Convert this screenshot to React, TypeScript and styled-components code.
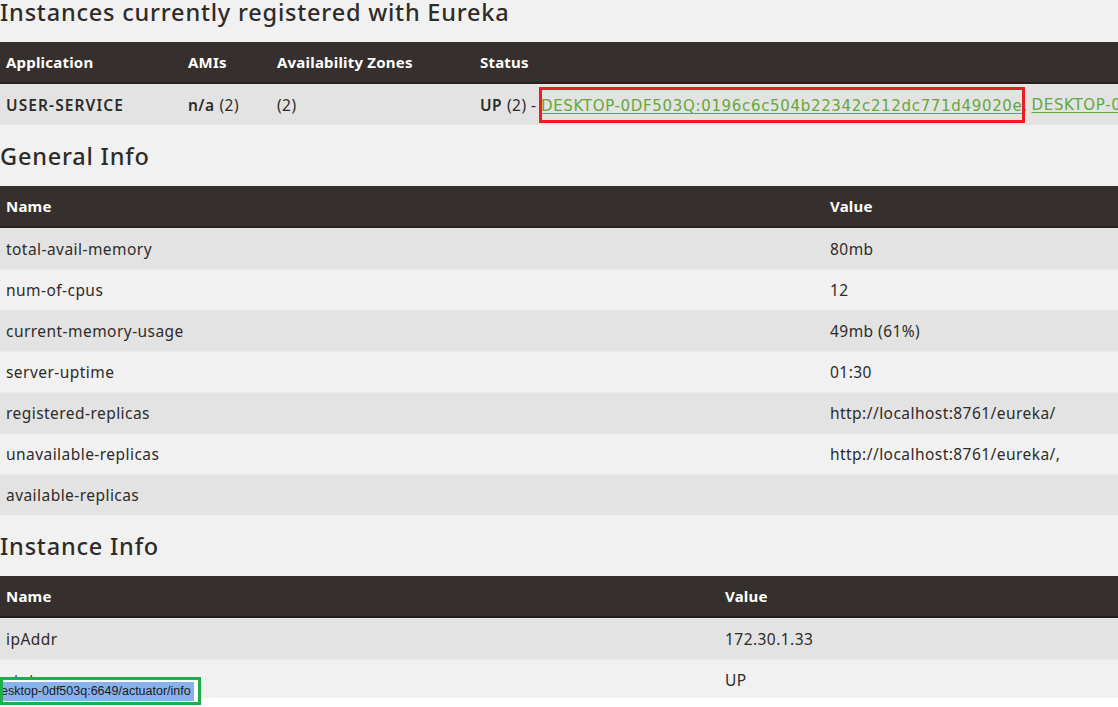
import React from "react";
import styled, { createGlobalStyle } from "styled-components";

const Global = createGlobalStyle`
  html, body { margin: 0; padding: 0; background: #ffffff; }
  body { font-family: "Noto Sans", "Open Sans", sans-serif; color: #2d2a28; overflow: hidden; }
  * { box-sizing: border-box; }
`;

const Viewport = styled.div`
  position: relative;
  width: 1118px;
  height: 707px;
  background: #ffffff;
`;

const Page = styled.div`
  width: 1118px;
  height: 698px;
  overflow: hidden;
  background: #f1f1f1;
`;

const Heading = styled.h2<{ $first?: boolean }>`
  margin: 0;
  height: ${(p) => (p.$first ? 42 : 61)}px;
  padding-top: ${(p) => (p.$first ? 0 : 19)}px;
  font-size: 23.5px;
  line-height: 24px;
  font-weight: 500;
  letter-spacing: 0.8px;
  color: #2e2b29;
  white-space: nowrap;
`;

const Table = styled.div<{ $cols: string; $width?: number }>`
  display: grid;
  grid-template-columns: ${(p) => p.$cols};
  width: ${(p) => (p.$width ? `${p.$width}px` : "100%")};
`;

const HeadCell = styled.div`
  height: 42px;
  background: #35302d;
  border-bottom: 2px solid #23201e;
  color: #ffffff;
  font-weight: 700;
  font-size: 15px;
  padding: 0 6px 1px;
  display: flex;
  align-items: center;
  letter-spacing: 0.2px;
  white-space: nowrap;
`;

const Cell = styled.div<{ $odd: boolean }>`
  height: 41px;
  padding: 0 6px 1px;
  display: flex;
  align-items: center;
  font-size: 15.5px;
  letter-spacing: 0.45px;
  white-space: nowrap;
  background: ${(p) => (p.$odd ? "#e3e3e3" : "#f1f1f1")};
  border-top: 1px solid #e9e9e9;
  color: #2e2b29;
`;

const B = styled.b<{ $wide?: boolean }>`
  font-weight: 600;
  margin-right: 5px;
  letter-spacing: ${(p) => (p.$wide ? "1.1px" : "0.45px")};
`;

const Link = styled.a`
  font-family: "DejaVu Sans", Verdana, sans-serif;
  font-size: 15px;
  letter-spacing: 0.67px;
  color: #64a83a;
  text-decoration: underline;
  text-underline-offset: 2px;
`;

const Boxed = styled.span`
  position: relative;
`;

const RedBox = styled.span`
  position: absolute;
  left: -2px;
  right: -3px;
  top: -7px;
  bottom: -7px;
  border: 3px solid #ec1c24;
  pointer-events: none;
`;

const StatusBar = styled.div`
  position: absolute;
  left: 0;
  top: 677px;
  width: 201px;
  height: 28px;
  border: 3px solid #1fae4b;
  background: #ffffff;
  padding: 2px 4px 1px 0;
  overflow: hidden;
`;

const StatusText = styled.div`
  height: 100%;
  background: #88b2eb;
  color: #1b1b1b;
  font-family: "Liberation Sans", Arial, sans-serif;
  font-size: 12.5px;
  line-height: 18px;
  white-space: nowrap;
  overflow: hidden;
  text-indent: -2px;
`;

const general: [string, string][] = [
  ["total-avail-memory", "80mb"],
  ["num-of-cpus", "12"],
  ["current-memory-usage", "49mb (61%)"],
  ["server-uptime", "01:30"],
  ["registered-replicas", "http://localhost:8761/eureka/"],
  ["unavailable-replicas", "http://localhost:8761/eureka/,"],
  ["available-replicas", ""],
];

const instance: [string, string][] = [
  ["ipAddr", "172.30.1.33"],
  ["status", "UP"],
];

export default function App() {
  return (
    <>
      <Global />
      <Viewport>
        <Page>
          <Heading $first>Instances currently registered with Eureka</Heading>
          <Table $cols="182px 89px 203px 1fr" $width={1500}>
            <HeadCell>Application</HeadCell>
            <HeadCell>AMIs</HeadCell>
            <HeadCell>Availability Zones</HeadCell>
            <HeadCell>Status</HeadCell>
            <Cell $odd>
              <B $wide>USER-SERVICE</B>
            </Cell>
            <Cell $odd>
              <B>n/a</B>(2)
            </Cell>
            <Cell $odd>(2)</Cell>
            <Cell $odd>
              <B>UP</B>(2) -&nbsp;
              <Boxed>
                <Link href="#">DESKTOP-0DF503Q:0196c6c504b22342c212dc771d49020e</Link>
                <RedBox />
              </Boxed>
              ,&nbsp;
              <Link href="#">DESKTOP-0DF503Q:7a1b2c3d4e5f</Link>
            </Cell>
          </Table>

          <Heading>General Info</Heading>
          <Table $cols="824px 1fr">
            <HeadCell>Name</HeadCell>
            <HeadCell>Value</HeadCell>
            {general.map(([k, v], i) => (
              <React.Fragment key={k}>
                <Cell $odd={i % 2 === 0}>{k}</Cell>
                <Cell $odd={i % 2 === 0}>{v}</Cell>
              </React.Fragment>
            ))}
          </Table>

          <Heading>Instance Info</Heading>
          <Table $cols="719px 1fr">
            <HeadCell>Name</HeadCell>
            <HeadCell>Value</HeadCell>
            {instance.map(([k, v], i) => (
              <React.Fragment key={k}>
                <Cell $odd={i % 2 === 0}>{k}</Cell>
                <Cell $odd={i % 2 === 0}>{v}</Cell>
              </React.Fragment>
            ))}
          </Table>
        </Page>
        <StatusBar>
          <StatusText>esktop-0df503q:6649/actuator/info</StatusText>
        </StatusBar>
      </Viewport>
    </>
  );
}
